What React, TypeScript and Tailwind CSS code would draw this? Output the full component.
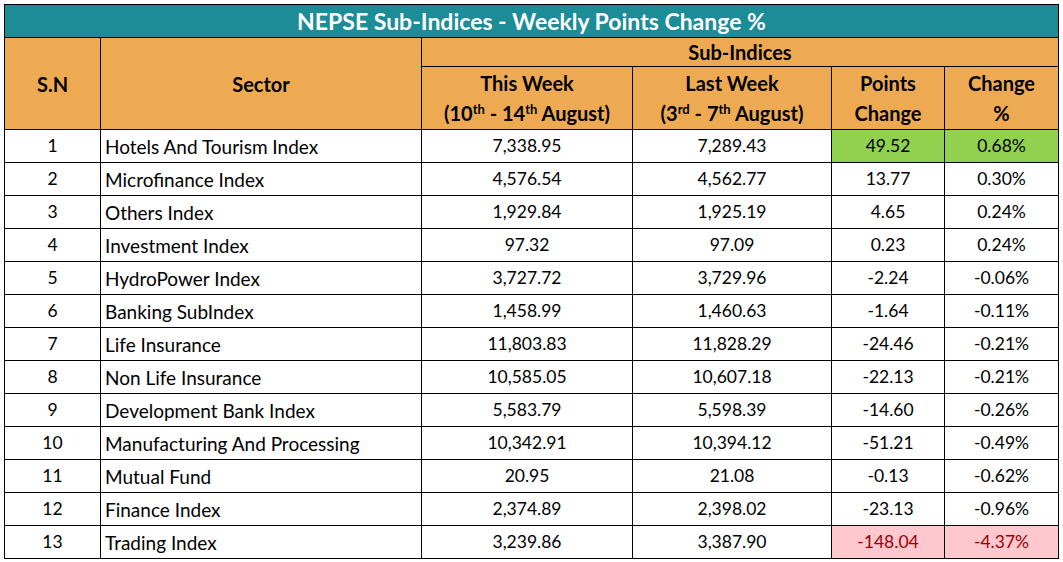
import React from "react";

type Row = [number, string, string, string, string, string];

const rows: Row[] = [
  [1, "Hotels And Tourism Index", "7,338.95", "7,289.43", "49.52", "0.68%"],
  [2, "Microfinance Index", "4,576.54", "4,562.77", "13.77", "0.30%"],
  [3, "Others Index", "1,929.84", "1,925.19", "4.65", "0.24%"],
  [4, "Investment Index", "97.32", "97.09", "0.23", "0.24%"],
  [5, "HydroPower Index", "3,727.72", "3,729.96", "-2.24", "-0.06%"],
  [6, "Banking SubIndex", "1,458.99", "1,460.63", "-1.64", "-0.11%"],
  [7, "Life Insurance", "11,803.83", "11,828.29", "-24.46", "-0.21%"],
  [8, "Non Life Insurance", "10,585.05", "10,607.18", "-22.13", "-0.21%"],
  [9, "Development Bank Index", "5,583.79", "5,598.39", "-14.60", "-0.26%"],
  [10, "Manufacturing And Processing", "10,342.91", "10,394.12", "-51.21", "-0.49%"],
  [11, "Mutual Fund", "20.95", "21.08", "-0.13", "-0.62%"],
  [12, "Finance Index", "2,374.89", "2,398.02", "-23.13", "-0.96%"],
  [13, "Trading Index", "3,239.86", "3,387.90", "-148.04", "-4.37%"],
];

const font = { fontFamily: "Lato, 'Open Sans', sans-serif" };

function Sup({ children }: { children: React.ReactNode }) {
  return <sup className="text-[13px] top-[-7px]">{children}</sup>;
}

export default function App() {
  return (
    <div className="bg-white w-[1063px] h-[562px] pt-[4px] pl-[4px]" style={font}>
      <table className="border-collapse table-fixed w-[1054px] text-black">
        <colgroup>
          <col className="w-[96px]" />
          <col className="w-[321px]" />
          <col className="w-[211px]" />
          <col className="w-[199px]" />
          <col className="w-[113px]" />
          <col className="w-[114px]" />
        </colgroup>
        <thead>
          <tr className="h-[33px]">
            <th
              colSpan={6}
              className="bg-[#1c8c97] text-white text-[23px] font-bold border border-black leading-none"
            >
              NEPSE Sub-Indices - Weekly Points Change %
            </th>
          </tr>
          <tr className="h-[29px] bg-[#edaa52]">
            <th rowSpan={2} className="border border-black text-[20px] font-bold">
              S.N
            </th>
            <th rowSpan={2} className="border border-black text-[20px] font-bold">
              Sector
            </th>
            <th colSpan={4} className="border border-black text-[20px] font-bold leading-none">
              Sub-Indices
            </th>
          </tr>
          <tr className="h-[63px] bg-[#edaa52] text-[20px] font-bold leading-[30px]">
            <th className="border border-black font-bold">
              This Week
              <br />
              (10<Sup>th</Sup> - 14<Sup>th</Sup> August)
            </th>
            <th className="border border-black font-bold">
              Last Week
              <br />
              (3<Sup>rd</Sup> - 7<Sup>th</Sup> August)
            </th>
            <th className="border border-black font-bold">
              Points
              <br />
              Change
            </th>
            <th className="border border-black font-bold">
              Change
              <br />%
            </th>
          </tr>
        </thead>
        <tbody className="text-[17.5px]">
          {rows.map((r) => {
            const first = r[0] === 1;
            const last = r[0] === 13;
            const hl = first
              ? "bg-[#92d050] text-black"
              : last
              ? "bg-[#ffc7ce] text-[#9c0006]"
              : "";
            return (
              <tr key={r[0]} className="h-[33px]">
                <td className="border border-black text-center leading-none">{r[0]}</td>
                <td className="border border-black pl-[4px] leading-none text-[19px]">{r[1]}</td>
                <td className="border border-black text-center leading-none">{r[2]}</td>
                <td className="border border-black text-center leading-none">{r[3]}</td>
                <td className={`border border-black text-center leading-none ${hl}`}>{r[4]}</td>
                <td className={`border border-black text-center leading-none ${hl}`}>{r[5]}</td>
              </tr>
            );
          })}
        </tbody>
      </table>
    </div>
  );
}
